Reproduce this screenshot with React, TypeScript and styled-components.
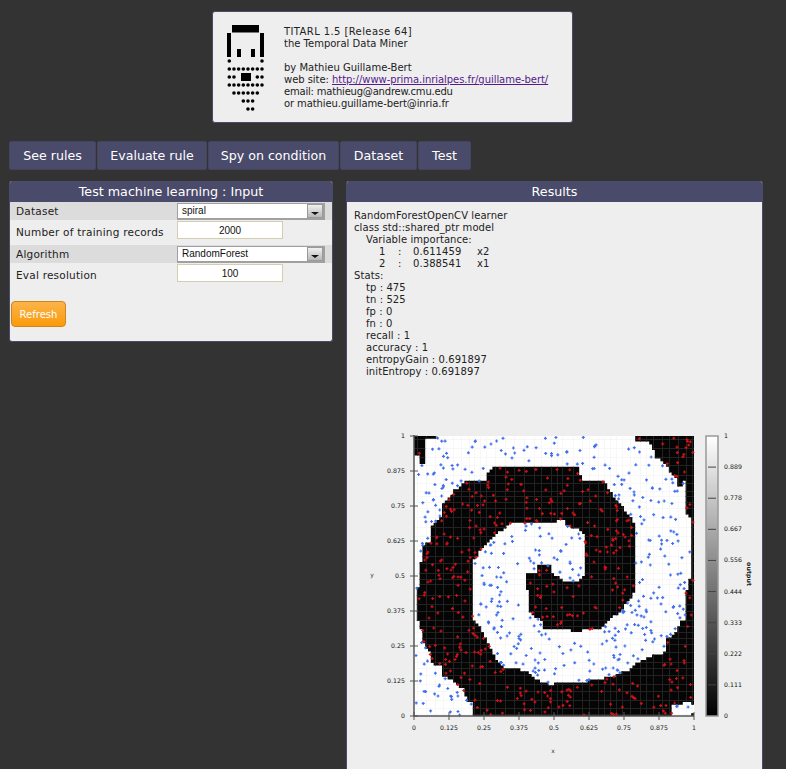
import React from 'react';
import styled, { createGlobalStyle } from 'styled-components';

const GlobalStyle = createGlobalStyle`
  html, body {
    margin: 0;
    height: 769px;
    overflow: hidden;
    background: #333333;
    font-family: "DejaVu Sans", Verdana, sans-serif;
  }
`;

const Page = styled.div`
  width: 786px;
  height: 769px;
  padding: 11px 22px 0 9px;
  box-sizing: border-box;
  overflow: hidden;
`;

const AboutCard = styled.div`
  width: 361px;
  height: 112px;
  box-sizing: border-box;
  margin-left: 203px;
  padding: 12px 14px 0 13px;
  display: flex;
  gap: 18px;
  background: #eeeeee;
  border: 1px solid #4a4a6a;
  border-radius: 3px;
`;

const AboutText = styled.div`
  margin-top: 2px;
  font-size: 10px;
  line-height: 12px;
  color: #222222;
  a {
    color: #551a8b;
  }
`;

const AboutLine = styled.div<{ $spacing?: number }>`
  height: 12px;
  white-space: nowrap;
  letter-spacing: ${(p) => p.$spacing ?? 0}px;
`;

const Nav = styled.div`
  display: flex;
  gap: 1px;
  margin-top: 18px;
`;

const NavButton = styled.div<{ $width: number }>`
  width: ${(p) => p.$width}px;
  height: 29px;
  display: flex;
  align-items: center;
  justify-content: center;
  font-size: 12.6px;
  color: #ffffff;
  background: #4a4a6a;
  border: 1px solid #44445f;
  box-sizing: border-box;
  border-radius: 2px;
`;

const Columns = styled.div`
  display: flex;
  align-items: flex-start;
  gap: 13px;
  margin-top: 11px;
`;

const Panel = styled.section<{ $width: number; $height: number }>`
  width: ${(p) => p.$width}px;
  height: ${(p) => p.$height}px;
  box-sizing: border-box;
  flex-shrink: 0;
  background: #eeeeee;
  border: 1px solid #4a4a6a;
  border-top: none;
  border-radius: 3px;
  overflow: hidden;
`;

const PanelTitle = styled.h2`
  margin: 0 -1px;
  height: 21px;
  display: flex;
  align-items: center;
  justify-content: center;
  background: #4a4a6a;
  color: #ffffff;
  font-size: 12.7px;
  font-weight: normal;
`;

const FormRow = styled.div<{ $shaded?: boolean; $height: number }>`
  height: ${(p) => p.$height}px;
  display: flex;
  align-items: ${(p) => (p.$shaded ? 'center' : 'flex-start')};
  padding-left: 6px;
  background: ${(p) => (p.$shaded ? '#dcdcdc' : 'transparent')};
`;

const FormLabel = styled.label`
  width: 161px;
  flex-shrink: 0;
  font-size: 10.5px;
  color: #222222;
  letter-spacing: 0.22px;
`;

const PlainLabel = styled(FormLabel)`
  padding-top: 6px;
`;

const SelectBox = styled.div`
  width: 148px;
  height: 17px;
  display: flex;
  align-items: center;
  box-sizing: border-box;
  background: #ffffff;
  border: 1px solid #a0a0a0;
  border-bottom-width: 2px;
  border-right-width: 2px;
  font-family: "Liberation Sans", Arial, sans-serif;
  font-size: 10px;
  color: #111111;
`;

const SelectValue = styled.span`
  flex: 1;
  padding-left: 4px;
`;

const SelectArrow = styled.span`
  width: 16px;
  height: 14px;
  display: flex;
  align-items: flex-end;
  justify-content: center;
  padding-bottom: 2px;
  box-sizing: border-box;
  background: linear-gradient(#f0f0f0, #b8b8b8);
  border: 1px solid #9a9a9a;
  &::after {
    content: '';
    border-left: 4px solid transparent;
    border-right: 4px solid transparent;
    border-top: 3px solid #111111;
  }
`;

const NumberField = styled.input`
  width: 106px;
  height: 18px;
  margin-top: 1px;
  padding: 0;
  box-sizing: border-box;
  background: #ffffff;
  border: 1px solid #d5cdb0;
  text-align: center;
  font-family: "Liberation Sans", Arial, sans-serif;
  font-size: 10px;
  color: #111111;
`;

const RefreshButton = styled.button`
  display: block;
  width: 55px;
  height: 26px;
  margin: 13px 0 0 1px;
  padding: 0;
  background: linear-gradient(#fbb44a, #fb9a0c);
  border: 1px solid #d0851a;
  border-radius: 4px;
  color: #ffffff;
  font-family: "DejaVu Sans", Verdana, sans-serif;
  font-size: 10px;
  font-weight: 500;
`;

const ResultsBody = styled.div`
  padding: 8px 0 0 7px;
  font-size: 10px;
  line-height: 12px;
  letter-spacing: 0.08px;
  color: #222222;
`;

const ResultLine = styled.div<{ $indent?: number }>`
  height: 12px;
  white-space: nowrap;
  padding-left: ${(p) => p.$indent ?? 0}px;
`;

const ImportanceRow = styled.div`
  height: 12px;
  display: grid;
  grid-template-columns: 19px 15px 64px auto;
  padding-left: 25px;
`;

const Plot = styled.svg`
  display: block;
  margin: 46px 0 0 -7px;
`;

type Pt = [number, number];

// traced from the decision surface, in page coordinates
const blackMain: Pt[] = [
  [473, 717], [473, 703], [467, 702], [463, 690], [452, 682], [442, 677], [442, 667], [432, 665], [430, 655],
  [423, 643], [420, 623], [417, 622], [417, 588], [420, 588], [420, 563], [423, 563], [423, 545], [432, 543],
  [432, 527], [442, 517], [443, 505], [453, 493], [465, 482], [488, 482], [488, 475], [495, 468], [578, 468],
  [583, 482], [605, 483], [612, 495], [622, 507], [630, 517], [635, 527], [635, 593], [630, 600], [620, 613],
  [607, 623], [600, 630], [577, 632], [543, 630], [543, 622], [528, 613], [527, 575], [538, 573], [538, 567],
  [552, 567], [552, 573], [565, 583], [578, 583], [585, 577], [585, 537], [577, 530], [567, 527], [565, 522],
  [510, 525], [497, 535], [480, 552], [473, 563], [473, 622], [480, 627], [493, 655], [503, 668], [527, 672],
  [540, 683], [550, 685], [580, 683], [613, 678], [630, 670], [640, 662], [652, 657], [666, 653], [667, 640],
  [675, 635], [680, 623], [686, 622], [686, 593], [689, 583], [691, 577], [691, 537], [690, 517], [685, 515],
  [685, 482], [683, 482], [683, 488], [677, 488], [677, 483], [678, 482], [663, 463], [655, 458], [653, 448],
  [648, 445], [648, 442], [635, 442], [635, 437], [694, 437], [694, 707], [690, 707], [690, 703], [683, 703],
  [683, 706], [672, 707], [672, 717],
];
const blackCorner: Pt[] = [
  [414, 437], [437, 437], [437, 440], [425, 440], [425, 465], [420, 465], [420, 457], [414, 457],
];
const blackNotch: Pt[] = [[694, 712], [694, 717], [690, 717]];

const inside = (poly: Pt[], x: number, y: number) => {
  let hit = false;
  for (let i = 0, j = poly.length - 1; i < poly.length; j = i++) {
    const [xi, yi] = poly[i];
    const [xj, yj] = poly[j];
    if (yi > y !== yj > y && x < ((xj - xi) * (y - yi)) / (yj - yi) + xi) hit = !hit;
  }
  return hit;
};
const isBlack = (x: number, y: number) =>
  inside(blackMain, x, y) || inside(blackCorner, x, y) || inside(blackNotch, x, y);

let seed = 4711;
const rand = () => {
  seed = (seed * 16807) % 2147483647;
  return seed / 2147483647;
};

const CELL = 2.8;
let surfacePath = '';
for (let r = 0; r < 100; r++) {
  for (let c = 0; c < 100; c++) {
    if (isBlack(414 + (c + 0.5) * CELL, 437 + (r + 0.5) * CELL)) {
      surfacePath += `M${(414 + c * CELL).toFixed(1)} ${(437 + r * CELL).toFixed(1)}h${CELL}v${CELL}h-${CELL}z`;
    }
  }
}

const gridLines: number[] = [];
for (let g = 3 + rand() * 5; g < 280; g += 4 + rand() * 7) gridLines.push(Math.round(g) + 0.5);

const points = Array.from({ length: 800 }, () => {
  const x = 415 + rand() * 278;
  const y = 438 + rand() * 278;
  return { x, y, black: isBlack(x, y) };
});
const plusPath = (black: boolean) =>
  points
    .filter((p) => p.black === black)
    .map((p) => `M${(p.x - 1.5).toFixed(1)} ${p.y.toFixed(1)}h3M${p.x.toFixed(1)} ${(p.y - 1.5).toFixed(1)}v3`)
    .join('');

const gridPath = gridLines.map((g) => `M${414 + g} 437V717M414 ${437 + g}H694`).join('');

const axisLabels = ['0', '0.125', '0.25', '0.375', '0.5', '0.625', '0.75', '0.875', '1'];
const barLabels = ['0', '0.111', '0.222', '0.333', '0.444', '0.556', '0.667', '0.778', '0.889', '1'];

const logoRows: [number, number[]][] = [
  [61, [0, 7]],
  [69, [0, 1, 2, 3, 4, 5, 6, 7]],
  [77, [0, 1, 6, 7]],
  [85, [0, 1, 2, 3, 4, 5, 6, 7]],
  [93, [1, 2, 3, 4, 5, 6]],
  [101, [3, 4, 5]],
  [109, [4, 5]],
];

const Logo = () => (
  <svg width="40" height="90" viewBox="226 24 40 90" style={{ flexShrink: 0 }}>
    <rect x="232" y="25" width="27" height="7.5" fill="#000" />
    <rect x="227" y="33" width="4" height="24" fill="#000" />
    <rect x="260" y="33" width="4" height="24" fill="#000" />
    <rect x="237" y="49" width="4" height="8" fill="#000" />
    <rect x="251" y="49" width="4" height="8" fill="#000" />
    <rect x="241" y="73" width="10" height="8" fill="#000" />
    {logoRows.map(([y, cols]) =>
      cols.map((i) => <circle key={`${y}-${i}`} cx={229.3 + 4.67 * i} cy={y} r="1.8" fill="#000" />),
    )}
  </svg>
);

const SpiralPlot = () => (
  <Plot width="416" height="344" viewBox="347 425 416 344" fontFamily="'DejaVu Sans', sans-serif">
    <defs>
      <linearGradient id="barFill" x1="0" y1="0" x2="0" y2="1">
        <stop offset="0" stopColor="#ffffff" />
        <stop offset="1" stopColor="#000000" />
      </linearGradient>
      <clipPath id="surfaceClip">
        <path d={surfacePath} />
      </clipPath>
    </defs>

    <rect x="414" y="437" width="280" height="280" fill="#ffffff" />
    <path d={gridPath} stroke="#f7f7f7" fill="none" />
    <path d={surfacePath} fill="#050505" />
    <path d={gridPath} stroke="#222222" fill="none" clipPath="url(#surfaceClip)" />
    <path d={plusPath(false)} stroke="#3f6ff0" strokeWidth="1.2" fill="none" />
    <path d={plusPath(true)} stroke="#d01018" strokeWidth="1.2" fill="none" />

    <path d="M414 436V717H694" stroke="#555555" strokeWidth="1.5" fill="none" />
    {axisLabels.map((label, i) => (
      <g key={label}>
        <line x1="410" y1={717 - 35 * i} x2="418" y2={717 - 35 * i} stroke="#555555" />
        <line x1={414 + 35 * i} y1="713" x2={414 + 35 * i} y2="721" stroke="#555555" />
        <text x="405" y={719 - 35 * i} textAnchor="end" fontSize="6.2" fill="#111">
          {label}
        </text>
        <text x={414 + 35 * i} y="731" textAnchor="middle" fontSize="6.2" fill="#111">
          {label}
        </text>
      </g>
    ))}

    <rect x="706" y="437" width="12" height="280" fill="url(#barFill)" stroke="#999999" strokeWidth="1.5" />
    {barLabels.map((label, i) => (
      <g key={label}>
        {i > 0 && i < 9 && (
          <line x1="708" y1={717 - 31.11 * i} x2="716" y2={717 - 31.11 * i} stroke="#444444" />
        )}
        <text x="724" y={719 - 31.11 * i} fontSize="6.2" fill="#111">
          {label}
        </text>
      </g>
    ))}

    <text x="553" y="754" textAnchor="middle" fontSize="6" fill="#333">x</text>
    <text x="372" y="578" textAnchor="middle" fontSize="6" fill="#333">y</text>
    <text x="0" y="0" textAnchor="middle" fontSize="6.2" fontWeight="bold" fill="#222" transform="translate(747 575) rotate(90)">
      output
    </text>
  </Plot>
);

const App: React.FC = () => (
  <Page>
    <GlobalStyle />
    <AboutCard>
      <Logo />
      <AboutText>
        <AboutLine $spacing={0.4}>TITARL 1.5 [Release 64]</AboutLine>
        <AboutLine>the Temporal Data Miner</AboutLine>
        <AboutLine />
        <AboutLine>by Mathieu Guillame-Bert</AboutLine>
        <AboutLine $spacing={-0.05}>
          web site: <a href="#site">http://www-prima.inrialpes.fr/guillame-bert/</a>
        </AboutLine>
        <AboutLine $spacing={-0.2}>email: mathieug@andrew.cmu.edu</AboutLine>
        <AboutLine $spacing={-0.1}>or mathieu.guillame-bert@inria.fr</AboutLine>
      </AboutText>
    </AboutCard>

    <Nav>
      <NavButton $width={87}>See rules</NavButton>
      <NavButton $width={110}>Evaluate rule</NavButton>
      <NavButton $width={131}>Spy on condition</NavButton>
      <NavButton $width={77}>Dataset</NavButton>
      <NavButton $width={53}>Test</NavButton>
    </Nav>

    <Columns>
      <Panel $width={324} $height={161}>
        <PanelTitle>Test machine learning : Input</PanelTitle>
        <FormRow $shaded $height={18}>
          <FormLabel>Dataset</FormLabel>
          <SelectBox>
            <SelectValue>spiral</SelectValue>
            <SelectArrow />
          </SelectBox>
        </FormRow>
        <FormRow $height={25}>
          <PlainLabel>Number of training records</PlainLabel>
          <NumberField readOnly value="2000" />
        </FormRow>
        <FormRow $shaded $height={18}>
          <FormLabel>Algorithm</FormLabel>
          <SelectBox>
            <SelectValue>RandomForest</SelectValue>
            <SelectArrow />
          </SelectBox>
        </FormRow>
        <FormRow $height={25}>
          <PlainLabel>Eval resolution</PlainLabel>
          <NumberField readOnly value="100" />
        </FormRow>
        <RefreshButton>Refresh</RefreshButton>
      </Panel>

      <Panel $width={417} $height={600}>
        <PanelTitle>Results</PanelTitle>
        <ResultsBody>
          <ResultLine>RandomForestOpenCV learner</ResultLine>
          <ResultLine>class std::shared_ptr model</ResultLine>
          <ResultLine $indent={12}>Variable importance:</ResultLine>
          <ImportanceRow>
            <span>1</span>
            <span>:</span>
            <span>0.611459</span>
            <span>x2</span>
          </ImportanceRow>
          <ImportanceRow>
            <span>2</span>
            <span>:</span>
            <span>0.388541</span>
            <span>x1</span>
          </ImportanceRow>
          <ResultLine>Stats:</ResultLine>
          <ResultLine $indent={12}>tp : 475</ResultLine>
          <ResultLine $indent={12}>tn : 525</ResultLine>
          <ResultLine $indent={12}>fp : 0</ResultLine>
          <ResultLine $indent={12}>fn : 0</ResultLine>
          <ResultLine $indent={12}>recall : 1</ResultLine>
          <ResultLine $indent={12}>accuracy : 1</ResultLine>
          <ResultLine $indent={12}>entropyGain : 0.691897</ResultLine>
          <ResultLine $indent={12}>initEntropy : 0.691897</ResultLine>
          <SpiralPlot />
        </ResultsBody>
      </Panel>
    </Columns>
  </Page>
);

export default App;
